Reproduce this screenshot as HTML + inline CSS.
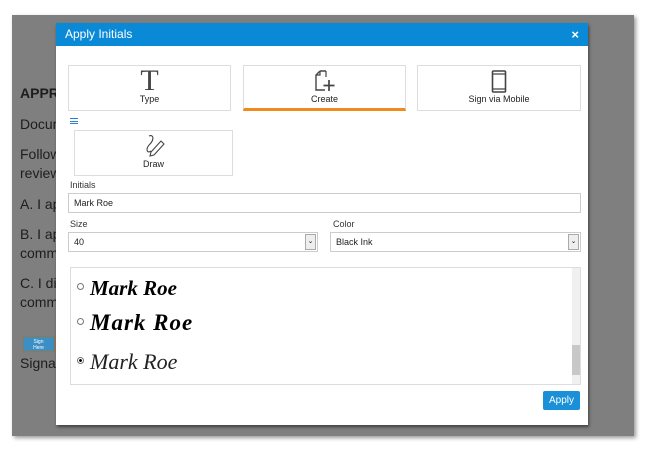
<!DOCTYPE html>
<html><head><meta charset="utf-8"><style>
*{box-sizing:border-box;margin:0;padding:0}
body{width:650px;height:450px;background:#fff;position:relative;overflow:hidden;font-family:"Liberation Sans",sans-serif}
.gray{position:absolute;left:12px;top:15px;width:622px;height:421px;background:#7f7f7f;box-shadow:2px 2px 4px rgba(0,0,0,.4)}
.doc{position:absolute;left:20px;font-size:14px;color:#1d1d1d}
.dlg{position:absolute;left:56px;top:23px;width:532px;height:402px;background:#fff;box-shadow:1px 2px 3px rgba(0,0,0,.5)}
.hdr{height:23px;background:#0a8ad6;color:#fff;font-size:12px;line-height:23px;padding-left:9px}
.x{position:absolute;right:9px;top:0;font-size:13px;font-weight:bold}
.tab{position:absolute;border:1px solid #ddd;background:#fff;text-align:center;font-size:9px;color:#222}
.tab svg{position:absolute;left:50%;transform:translateX(-50%)}
.tl{position:absolute;left:0;right:0;top:28px}
.lbl{position:absolute;font-size:9px;color:#333}
.inp{position:absolute;border:1px solid #ccc;height:20px;font-size:9px;line-height:18px;padding-left:5px;color:#222;background:#fff}
.arr{position:absolute;right:1px;top:1px;width:11px;height:16px;border:1px solid #aaa;background:#eee;font-size:7px;text-align:center;line-height:14px}
.sig{position:absolute;left:90px;font-family:"Liberation Serif",serif;font-style:italic;color:#000}
.rad{position:absolute;left:77px;width:7px;height:7px;border:1px solid #777;border-radius:50%}
</style></head><body>
<div class="gray"></div>
<div class="doc" style="top:85px;font-weight:bold">APPRO</div>
<div class="doc" style="top:116px">Docum</div>
<div class="doc" style="top:146px">Follow</div>
<div class="doc" style="top:165px">review</div>
<div class="doc" style="top:196px">A. I ap</div>
<div class="doc" style="top:226px">B. I ap</div>
<div class="doc" style="top:245px">comm</div>
<div class="doc" style="top:275px">C. I dis</div>
<div class="doc" style="top:294px">comm</div>
<div style="position:absolute;left:22px;top:336px;width:33px;height:16px;background:#3b8fc4;border:1px solid #a0743a;font-size:5px;color:#fff;text-align:center;line-height:6px;padding-top:2px">Sign<br>Here</div>
<div class="doc" style="top:355px">Signat</div>
<div class="dlg">
<div class="hdr">Apply Initials<span class="x">×</span></div>
</div>
<div class="tab" style="left:68px;top:65px;width:163px;height:46px"><div style="position:absolute;left:0;right:0;top:2px;font-family:'Liberation Serif',serif;font-size:30px;line-height:26px;color:#444">T</div><div class="tl">Type</div></div>
<div class="tab" style="left:243px;top:65px;width:163px;height:46px;border-bottom:3px solid #f08a1c"><svg style="top:4px" width="20" height="22" viewBox="0 0 20 22"><path d="M5 1h6M5 1L1 5v15h9" fill="none" stroke="#444" stroke-width="1.4"/><path d="M1 5h4V1M11 1v6" fill="none" stroke="#444" stroke-width="1.2"/><path d="M14 10v11M8.5 15.5h11" stroke="#444" stroke-width="1.7"/></svg><div class="tl">Create</div></div>
<div class="tab" style="left:417px;top:65px;width:164px;height:46px"><svg style="top:4px" width="15" height="23" viewBox="0 0 15 23"><rect x="1" y="1" width="13" height="21" rx="1" fill="none" stroke="#444" stroke-width="1.6"/><path d="M1 4h13M1 19h13" stroke="#444" stroke-width="1.2"/></svg><div class="tl">Sign via Mobile</div></div>
<div style="position:absolute;left:70px;top:118px;width:8px;height:6px;border-top:1px solid #2a7fd0;border-bottom:1px solid #2a7fd0"><div style="margin-top:1.5px;height:1px;background:#2a7fd0"></div></div>
<div class="tab" style="left:74px;top:130px;width:159px;height:46px"><svg style="top:3px" width="24" height="24" viewBox="0 0 24 24"><path d="M7 2c5-2 5 4 1 8c-5 5-3 10 1 7" fill="none" stroke="#444" stroke-width="1.1"/><path d="M9 18l10-11 3 3-10 11-4 1z" fill="none" stroke="#444" stroke-width="1.1"/></svg><div class="tl">Draw</div></div>
<div class="lbl" style="left:70px;top:180px">Initials</div>
<div class="inp" style="left:68px;top:193px;width:513px">Mark Roe</div>
<div class="lbl" style="left:70px;top:219px">Size</div>
<div class="inp" style="left:68px;top:232px;width:250px">40<div class="arr">⌄</div></div>
<div class="lbl" style="left:333px;top:219px">Color</div>
<div class="inp" style="left:330px;top:232px;width:251px">Black Ink<div class="arr">⌄</div></div>
<div style="position:absolute;left:70px;top:267px;width:511px;height:118px;border:1px solid #ddd"></div>
<div style="position:absolute;left:572px;top:268px;width:8px;height:116px;background:#f0f0f0"><div style="position:absolute;top:77px;width:8px;height:30px;background:#c8c8c8"></div></div>
<div class="rad" style="top:283px"></div>
<div class="sig" style="top:276px;font-size:21px;font-weight:bold">Mark Roe</div>
<div class="rad" style="top:318px"></div>
<div class="sig" style="top:310px;font-size:23px;font-weight:bold;letter-spacing:1px">Mark Roe</div>
<div class="rad" style="top:357px;background:radial-gradient(#000 35%,#fff 45%)"></div>
<div class="sig" style="top:349px;font-size:22px;color:#222">Mark Roe</div>
<div style="position:absolute;left:543px;top:391px;width:37px;height:19px;background:#1a90d8;border-radius:2px;color:#fff;font-size:10px;text-align:center;line-height:19px">Apply</div>
</body></html>
